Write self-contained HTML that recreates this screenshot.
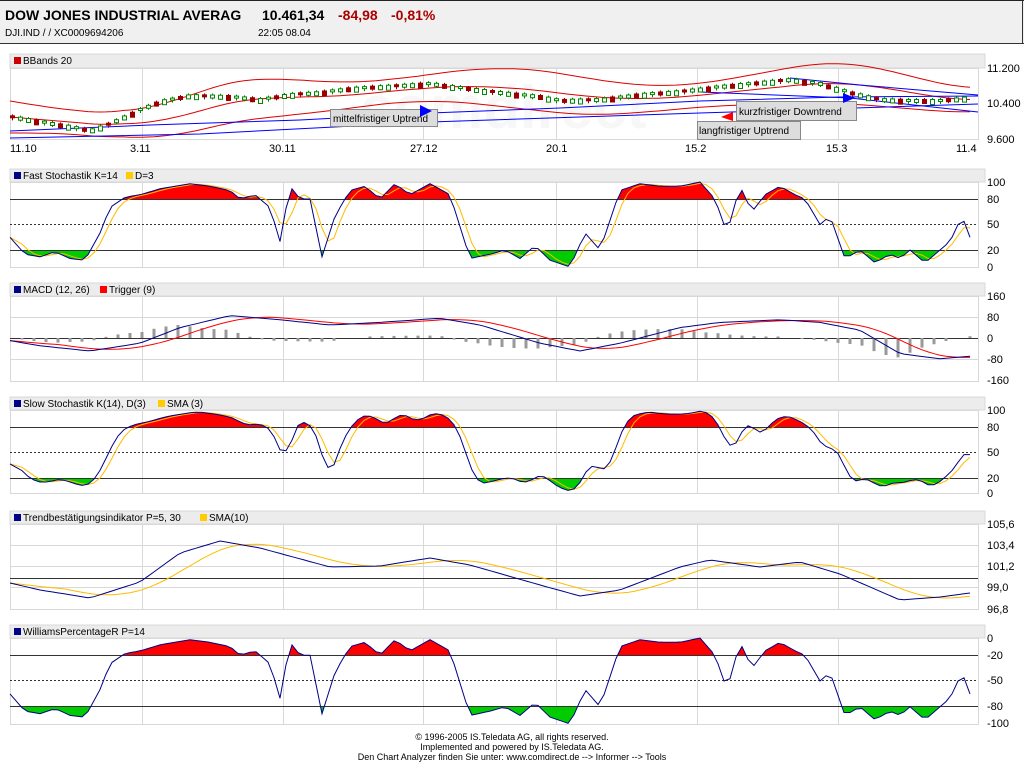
<!DOCTYPE html>
<html><head><meta charset="utf-8"><style>
body{margin:0;width:1024px;height:762px;background:#fff;font-family:"Liberation Sans",sans-serif;overflow:hidden}
svg{display:block}
</style></head><body>
<svg id="s" width="1024" height="762" xmlns="http://www.w3.org/2000/svg" font-family="Liberation Sans, sans-serif">
<rect x="0" y="0" width="1024" height="43" fill="#f0f0f0"/>
<line x1="0" y1="0.5" x2="1024" y2="0.5" stroke="#222"/>
<line x1="0" y1="43.5" x2="1024" y2="43.5" stroke="#333"/>
<line x1="1022.5" y1="0" x2="1022.5" y2="43" stroke="#333"/>
<text x="5" y="20" font-size="14" font-weight="bold" fill="#000">DOW JONES INDUSTRIAL AVERAG</text>
<text x="262" y="20" font-size="14" font-weight="bold" fill="#000">10.461,34</text>
<text x="338" y="20" font-size="14" font-weight="bold" fill="#a00">-84,98</text>
<text x="391" y="20" font-size="14" font-weight="bold" fill="#a00">-0,81%</text>
<text x="5" y="36" font-size="10" fill="#000">DJI.IND  /     /  XC0009694206</text>
<text x="258" y="36" font-size="10" fill="#000">22:05   08.04</text>
<g id="g"></g>
<text x="512" y="740" font-size="9" text-anchor="middle">© 1996-2005 IS.Teledata AG, all rights reserved.</text>
<text x="512" y="750" font-size="9" text-anchor="middle">Implemented and powered by IS.Teledata AG.</text>
<text x="512" y="760" font-size="9" text-anchor="middle">Den Chart Analyzer finden Sie unter: www.comdirect.de --&gt; Informer --&gt; Tools</text>
</svg>
<script>
var g=document.getElementById('g'),h='';
var VX=[142,283,423,556,697,838];
function interp(k,x){for(var i=0;i<k.length-2;i+=2){if(x<=k[i+2])return k[i+1]+(k[i+3]-k[i+1])*(x-k[i])/(k[i+2]-k[i]);}return k[k.length-1];}
var XS=[];for(var x=10;x<=970;x+=6)XS.push(x);
function ser(k){return XS.map(function(x){return interp(k,x)})}
function sm(a,n){return a.map(function(v,i){var s=0,c=0;for(var j=i-n+1;j<=i;j++){if(j>=0){s+=a[j];c++}}return s/c})}
function pl(a,f,col,w){return '<polyline fill="none" stroke="'+col+'" stroke-width="'+(w||1)+'" points="'+a.map(function(v,i){return XS[i]+','+f(v).toFixed(1)}).join(' ')+'"/>'}
function panel(hy,top,bot,title,legend){
 h+='<rect x="10" y="'+hy+'" width="975" height="'+(top-hy)+'" fill="#ececec" stroke="#d8d8d8"/>';
 h+='<rect x="10.5" y="'+(top+.5)+'" width="968" height="'+(bot-top)+'" fill="#fff" stroke="#d8d8d8"/>';
 VX.forEach(function(v){h+='<line x1="'+v+'.5" y1="'+top+'" x2="'+v+'.5" y2="'+bot+'" stroke="#d8d8d8"/>'});
 var lx=14;legend.forEach(function(l){h+='<rect x="'+lx+'" y="'+(hy+3)+'" width="7" height="7" fill="'+l[0]+'"/><text x="'+(lx+9)+'" y="'+(hy+10)+'" font-size="10">'+l[1]+'</text>';lx+=l[2]});
}
function lab(list){list.forEach(function(l){h+='<text x="987" y="'+(l[1]+4)+'" font-size="11">'+l[0]+'</text>'})}
function hl(y,col,dash){h+='<line x1="10" y1="'+y+'.5" x2="978" y2="'+y+'.5" stroke="'+col+'"'+(dash?' stroke-dasharray="2,2"':'')+'/>'}
function fills(a,f,yh,yl,top,bot){var p=a.map(function(v,i){return XS[i]+','+f(v).toFixed(1)}).join(' ');
 h+='<clipPath id="c'+yh+'"><rect x="0" y="'+top+'" width="1000" height="'+(yh-top)+'"/></clipPath><polygon clip-path="url(#c'+yh+')" fill="#f00" points="'+p+' 970,'+yh+' 10,'+yh+'"/>';
 h+='<clipPath id="d'+yl+'"><rect x="0" y="'+yl+'" width="1000" height="'+(bot-yl)+'"/></clipPath><polygon clip-path="url(#d'+yl+')" fill="#0c0" points="'+p+' 970,'+yl+' 10,'+yl+'"/>';}
var KK=[10,35,25,15,40,12,55,18,70,10,85,8,100,40,110,70,125,82,140,85,160,92,190,98,210,95,230,90,240,80,255,85,270,70,280,30,290,95,300,80,310,80,322,12,335,60,350,90,365,95,380,80,395,98,410,85,430,98,450,85,470,10,490,15,505,20,520,10,535,25,550,8,570,0,585,40,600,20,620,90,640,98,660,95,680,95,700,100,715,80,727,40,740,95,752,65,765,85,780,95,795,85,805,80,820,50,830,60,845,10,860,20,875,5,890,15,900,10,910,20,925,5,940,20,950,30,962,60,970,35];
var K=ser(KK),D=sm(K,3),SK=sm(K,3),SD=sm(SK,3);
panel(54,68,139,'',[['#c00','BBands 20',0]]);
h+='<text x="360" y="128" font-size="60" font-weight="bold" fill="#f7f7f7">comdirect</text>';
var PK=[10,117,40,122,70,127,90,131,110,124,140,110,160,102,190,96,230,97,260,100,290,95,320,93,350,89,400,86,430,84,460,88,500,93,540,97,560,101,600,100,640,95,680,92,720,87,760,83,790,80,820,84,850,93,880,100,910,101,940,101,970,98];
var P=ser(PK);
var M=sm(P,20);
h+=pl(M.map(function(v,i){return v-16+Math.sin(i/8)*4}),function(v){return v},'#d00');
h+=pl(M,function(v){return v},'#d00');
h+=pl(M.map(function(v,i){return v+16-Math.sin(i/8)*4}),function(v){return v},'#d00');
h+='<polyline fill="none" stroke="#00f" points="10,131 150,125 300,120 430,113 560,108 700,101 840,97 978,96"/>';
h+='<polyline fill="none" stroke="#00f" points="10,138 200,134 430,122 700,113 978,104"/>';
h+='<polyline fill="none" stroke="#00f" points="790,78 860,85 978,95"/><polyline fill="none" stroke="#00f" points="700,92 850,98 978,112"/>';
for(var x=12,i=0;x<=968;x+=8,i++){var v=interp(PK,x),up=(i*7)%3!=0,c=up?'#080':'#900';h+='<line x1="'+x+'.5" y1="'+(v-3)+'" x2="'+x+'.5" y2="'+(v+3)+'" stroke="'+c+'"/><rect x="'+(x-1.5)+'" y="'+(v-1.5)+'" width="4" height="'+(2+(i%4))+'" fill="'+(up?'#fff':'#900')+'" stroke="'+c+'"/>'}
h+='<rect x="330.5" y="109.5" width="107" height="17" fill="#ddd" stroke="#888"/><text x="333" y="122" font-size="10">mittelfristiger Uptrend</text><polygon points="420,105 432,111 420,117" fill="#00f"/>';
h+='<rect x="736.5" y="101.5" width="120" height="19" fill="#ddd" stroke="#888"/><text x="739" y="115" font-size="10">kurzfristiger Downtrend</text>';
h+='<rect x="697.5" y="121.5" width="103" height="18" fill="#ddd" stroke="#888"/><text x="699" y="134" font-size="10">langfristiger Uptrend</text><polygon points="733,112 721,117 733,121" fill="#f00"/><polygon points="843,93 855,98 843,103" fill="#00f"/>';
lab([['11.200',68],['10.400',103],['9.600',139]]);
[['11.10',10],['3.11',130],['30.11',269],['27.12',410],['20.1',546],['15.2',685],['15.3',826],['11.4',956]].forEach(function(l){h+='<text x="'+l[1]+'" y="152" font-size="11">'+l[0]+'</text>'});
panel(169,182,267,'',[['#008','Fast Stochastik K=14',112],['#fc0','D=3',0]]);
var f2=function(v){return 267-v*0.85};
fills(K,f2,199,250,182,267);hl(199,'#333');hl(224,'#333',1);hl(250,'#333');
h+=pl(D,f2,'#fb0');h+=pl(K,f2,'#008');
lab([['100',182],['80',199],['50',224],['20',250],['0',267]]);
panel(283,296,381,'',[['#008','MACD (12, 26)',86],['#f00','Trigger (9)',0]]);
[317,359].forEach(function(y){hl(y,'#d8d8d8')});hl(338,'#333');
var MA=ser([10,-5,40,-15,90,-25,140,-10,180,20,230,43,280,35,330,25,380,30,440,38,480,25,540,-10,580,-25,620,-10,680,20,720,30,780,35,820,30,860,15,900,-30,940,-40,970,-35]);
var TR=sm(MA,9);
MA.forEach(function(v,i){if(i%2)return;var d=(v-TR[i])*0.75;if(Math.abs(d)>1)h+='<rect x="'+(XS[i]-1.5)+'" y="'+(d>0?338-d:338)+'" width="3" height="'+Math.abs(d)+'" fill="#999"/>'});
h+=pl(TR,function(v){return 338-v*0.52},'#f00');h+=pl(MA,function(v){return 338-v*0.52},'#008');
lab([['160',296],['80',317],['0',338],['-80',359],['-160',380]]);
panel(397,410,493,'',[['#008','Slow Stochastik K(14), D(3)',144],['#fc0','SMA (3)',0]]);
var f4=function(v){return 493-v*0.83};
fills(SK,f4,427,478,410,493);hl(427,'#333');hl(452,'#333',1);hl(478,'#333');
h+=pl(SD,f4,'#fb0');h+=pl(SK,f4,'#008');
lab([['100',410],['80',427],['50',452],['20',478],['0',493]]);
panel(511,524,609,'',[['#008','Trendbestätigungsindikator P=5, 30',186],['#fc0','SMA(10)',0]]);
[545,566,587].forEach(function(y){hl(y,'#d8d8d8')});hl(578,'#333');
var T=ser([10,583,40,590,90,598,140,582,180,553,220,541,260,548,330,567,380,566,430,558,470,565,540,585,580,596,620,590,680,567,710,560,760,567,800,562,840,574,900,600,940,597,970,593]);
h+=pl(sm(T,10),function(v){return v},'#fb0');h+=pl(T,function(v){return v},'#008');
lab([['105,6',524],['103,4',545],['101,2',566],['99,0',587],['96,8',609]]);
panel(625,638,724,'',[['#008','WilliamsPercentageR P=14',0]]);
var f6=function(v){return 724-v*0.86};
fills(K,f6,655,706,638,724);hl(655,'#333');hl(680,'#333',1);hl(706,'#333');
h+=pl(K,f6,'#008');
lab([['0',638],['-20',655],['-50',680],['-80',706],['-100',723]]);
g.innerHTML=h;
</script>
</body></html>
